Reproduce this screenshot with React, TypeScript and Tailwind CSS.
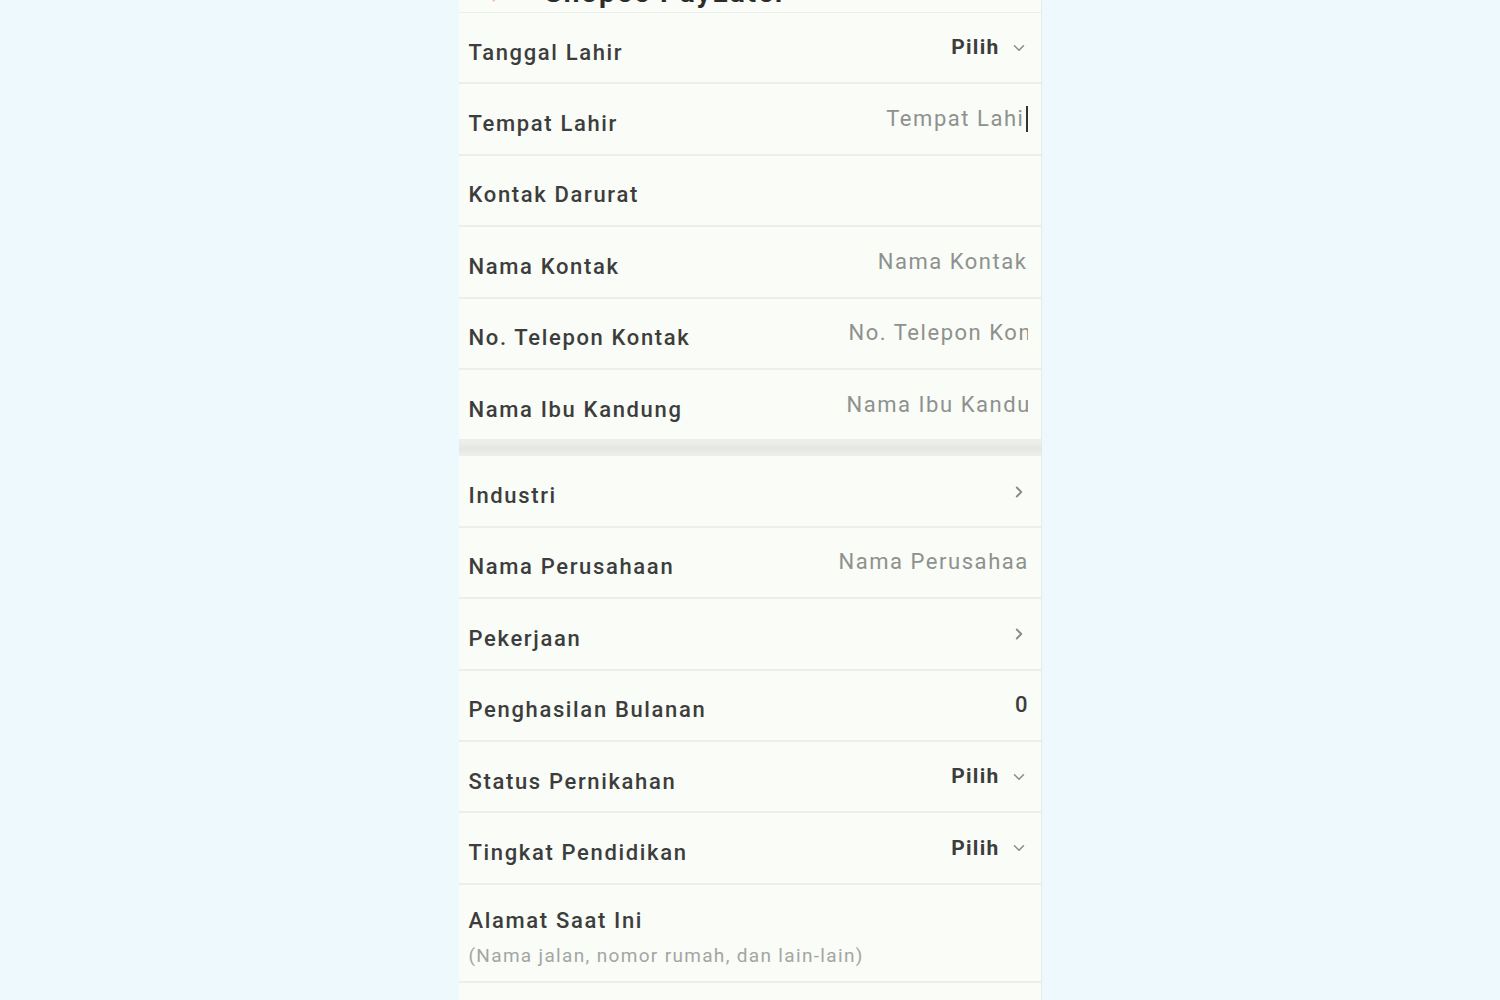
import { ChevronDown, ChevronRight, ArrowLeft } from "lucide-react";

type Row =
  | { label: string; kind: "select" }
  | { label: string; kind: "input"; placeholder: string; width: string }
  | { label: string; kind: "cursor"; placeholder: string }
  | { label: string; kind: "arrow" }
  | { label: string; kind: "value"; value: string }
  | { label: string; kind: "none" };

const personal: Row[] = [
  { label: "Tanggal Lahir", kind: "select" },
  { label: "Tempat Lahir", kind: "cursor", placeholder: "Tempat Lahi" },
  { label: "Kontak Darurat", kind: "none" },
  { label: "Nama Kontak", kind: "input", placeholder: "Nama Kontak", width: "w-[180px]" },
  { label: "No. Telepon Kontak", kind: "input", placeholder: "No. Telepon Kontak", width: "w-[179px]" },
  { label: "Nama Ibu Kandung", kind: "input", placeholder: "Nama Ibu Kandung", width: "w-[181px]" },
];

const work: Row[] = [
  { label: "Industri", kind: "arrow" },
  { label: "Nama Perusahaan", kind: "input", placeholder: "Nama Perusahaan", width: "w-[189px]" },
  { label: "Pekerjaan", kind: "arrow" },
  { label: "Penghasilan Bulanan", kind: "value", value: "0" },
  { label: "Status Pernikahan", kind: "select" },
  { label: "Tingkat Pendidikan", kind: "select" },
];

const font = { fontFamily: "Roboto, 'Liberation Sans', sans-serif" };

const App = () => {
  return (
    <div className="min-h-screen w-full bg-[#eef9fd] flex justify-center overflow-hidden" style={font}>
      <div className="w-[583px] h-[1000px] bg-[#f9fcf7] border-r border-[#e4eae8] flex flex-col overflow-hidden">
        <div className="h-[40px] mt-[-27px] shrink-0 flex items-center gap-[38px] pl-[22px] border-b border-[#eceee9]">
          <ArrowLeft size={26} strokeWidth={2} className="text-[#f06a3d] opacity-40" />
          <h1 className="text-[28px] font-bold text-[#2c2c2c] tracking-[0.07em] whitespace-nowrap">
            Shopee PayLater
          </h1>
        </div>
        {personal.map((r) => (
          <FormRow key={r.label} row={r} />
        ))}
        <div className="h-[15px] shrink-0 bg-gradient-to-b from-[#edf0ec] via-[#e4e7e3] to-[#edf0ec]" />
        {work.map((r) => (
          <FormRow key={r.label} row={r} />
        ))}
        <div className="h-[98px] shrink-0 flex flex-col pl-[10px] pt-[22px] border-b-2 border-[#eceee9]">
          <span className="text-[22px] font-medium text-[#3d3d3d] tracking-[0.075em] leading-[28px]">
            Alamat Saat Ini
          </span>
          <span className="text-[19px] text-[#a3a6a3] tracking-[0.07em] leading-[24px] mt-[9px]">
            (Nama jalan, nomor rumah, dan lain-lain)
          </span>
        </div>
      </div>
    </div>
  );
};

function FormRow({ row }: { row: Row }) {
  return (
    <div className="h-[71.4px] shrink-0 flex items-center justify-between pl-[10px] pr-[13px] pt-[9px] border-b-2 border-[#eceee9]">
      <span className="text-[22px] font-medium text-[#3d3d3d] tracking-[0.075em] whitespace-nowrap">
        {row.label}
      </span>
      <RowValue row={row} />
    </div>
  );
}

function RowValue({ row }: { row: Row }) {
  switch (row.kind) {
    case "select":
      return (
        <div className="flex items-center gap-[10px] -mt-[8px]">
          <span className="text-[21px] font-bold text-[#3d3d3d] tracking-[0.06em]">Pilih</span>
          <ChevronDown size={18} strokeWidth={2} className="text-[#8a8a8a]" />
        </div>
      );
    case "input":
      return (
        <div
          className={`${row.width} overflow-hidden whitespace-nowrap text-right text-[22px] text-[#8e918e] tracking-[0.07em] -mt-[10px]`}
        >
          {row.placeholder}
        </div>
      );
    case "cursor":
      return (
        <div className="flex items-center -mt-[10px] text-[22px] text-[#8e918e] tracking-[0.07em] whitespace-nowrap">
          {row.placeholder}
          <span className="inline-block w-[2px] h-[26px] bg-[#333] ml-[1px]" />
        </div>
      );
    case "arrow":
      return <ChevronRight size={18} strokeWidth={2.4} className="text-[#8a8a8a] -mt-[8px]" />;
    case "value":
      return <span className="text-[22px] font-medium text-[#3d3d3d] -mt-[10px]">{row.value}</span>;
    default:
      return null;
  }
}

export default App;
